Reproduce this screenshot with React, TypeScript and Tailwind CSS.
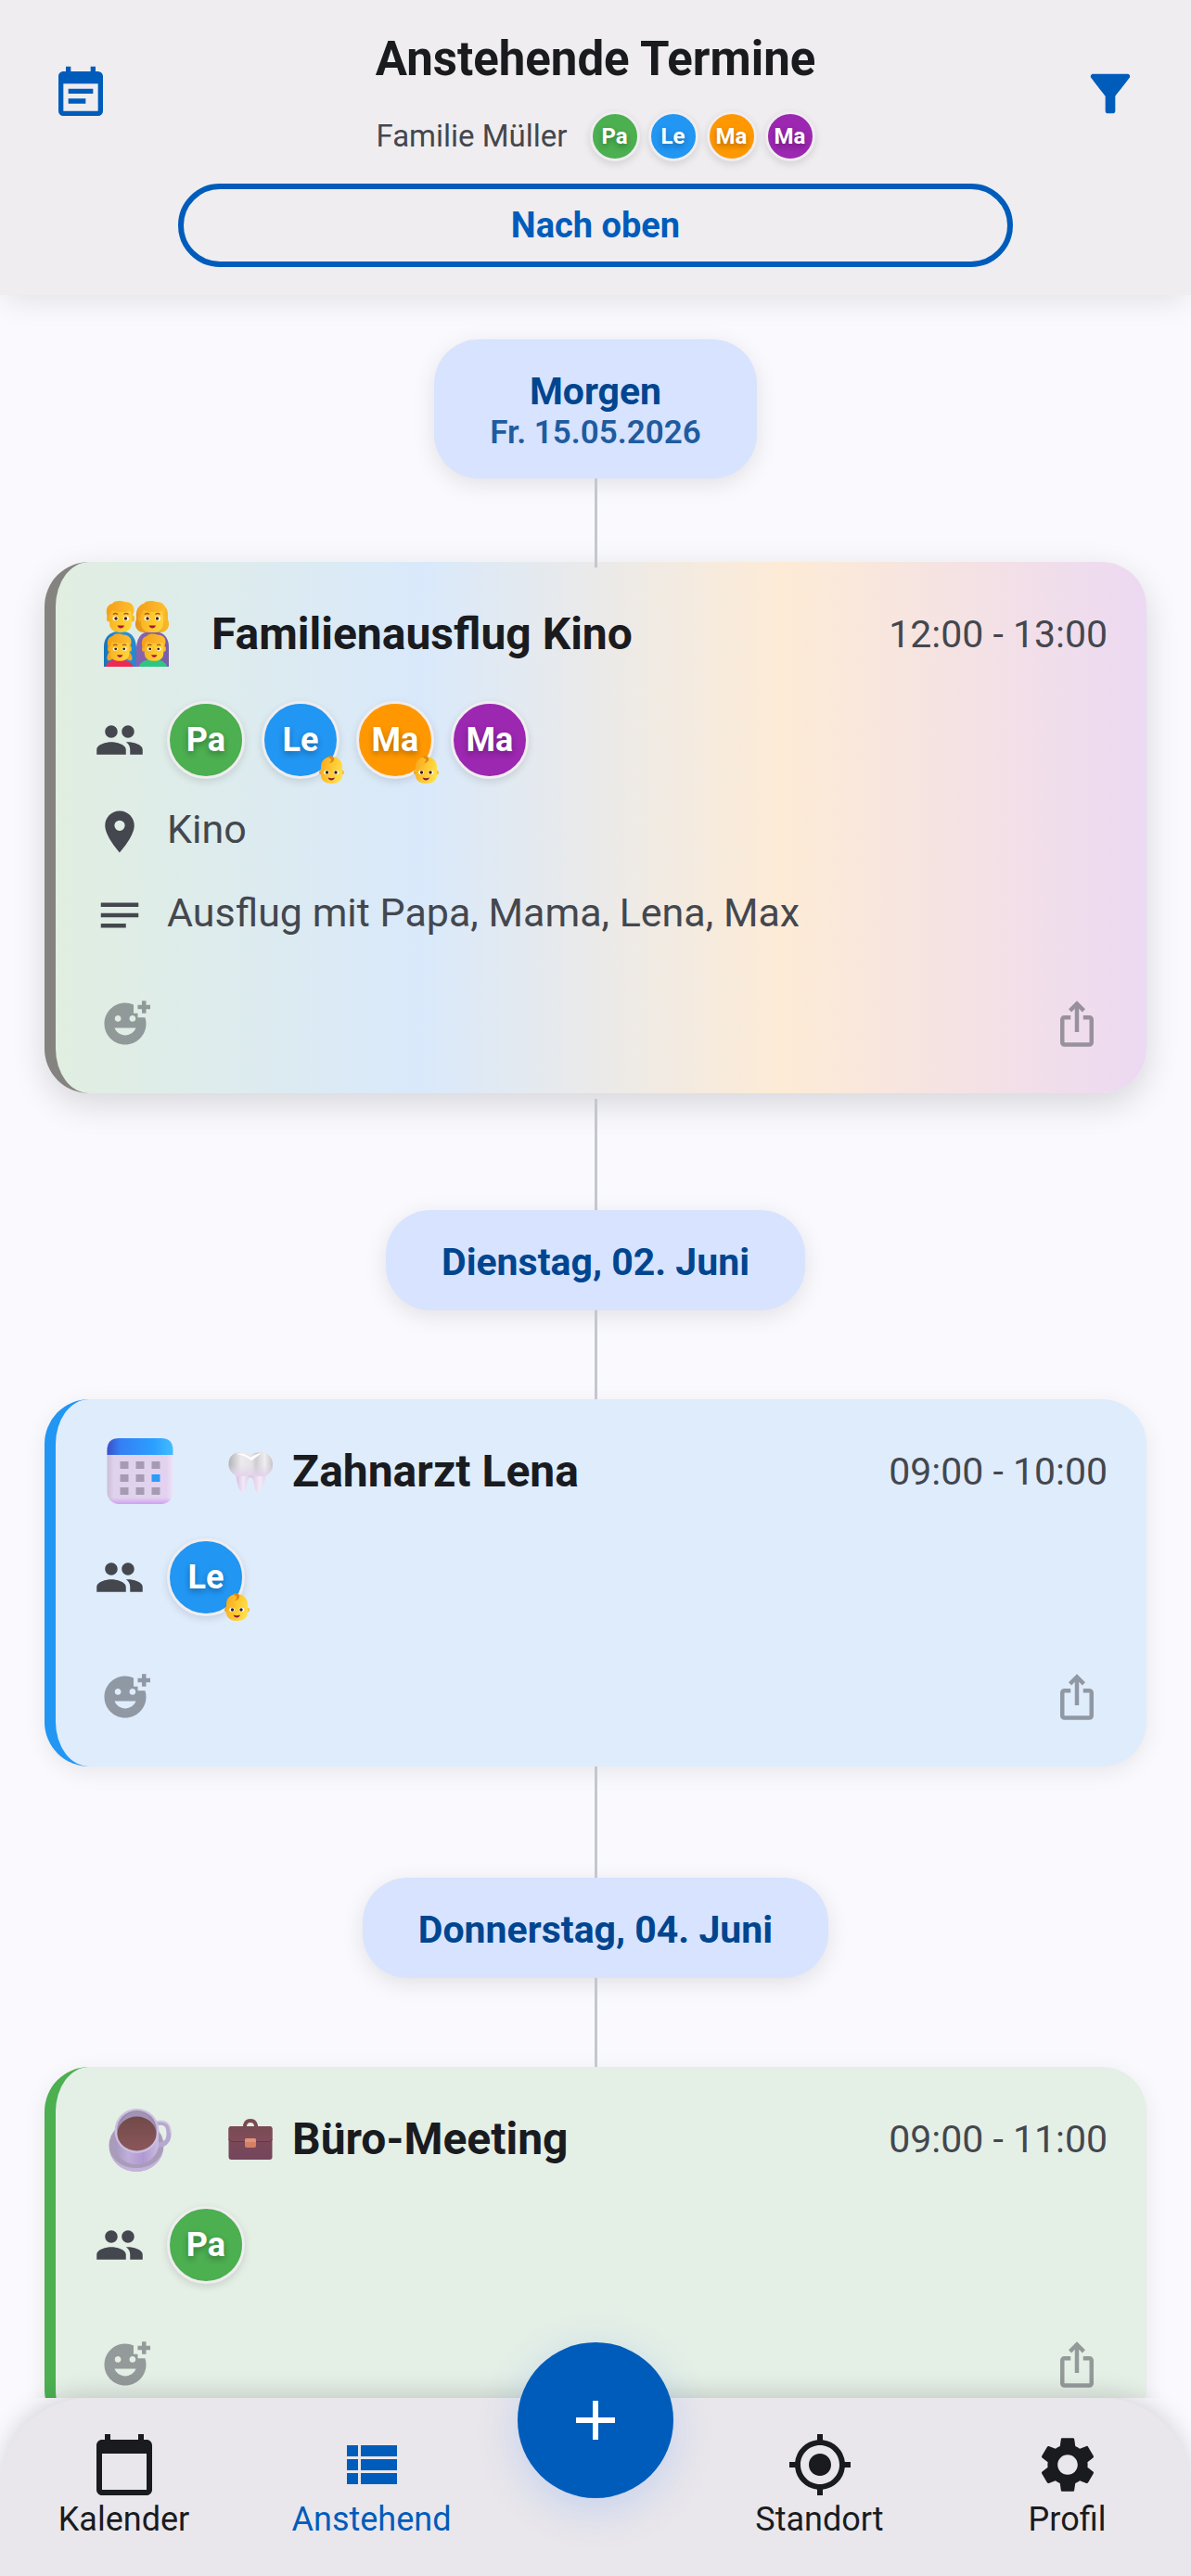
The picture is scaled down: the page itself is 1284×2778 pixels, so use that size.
import { useId } from "react";
import type { ReactNode } from "react";
import {
  MdAdd,
  MdAddReaction,
  MdCalendarToday,
  MdFilterAlt,
  MdIosShare,
  MdLocationOn,
  MdMyLocation,
  MdNotes,
  MdPeople,
  MdSettings,
  MdViewList,
} from "react-icons/md";

type Member = { name: string; color: string; child?: boolean };

const PAPA: Member = { name: "Pa", color: "bg-[#4caf50]" };
const LENA: Member = { name: "Le", color: "bg-[#2196f3]", child: true };
const MAX: Member = { name: "Ma", color: "bg-[#ff9800]", child: true };
const MAMA: Member = { name: "Ma", color: "bg-[#9c27b0]" };
const FAMILY = [PAPA, LENA, MAX, MAMA];

function CalendarTextIcon() {
  return (
    <svg viewBox="0 0 24 24" className="size-16 fill-current" aria-hidden="true">
      <path d="M14 14H7v2h7v-2m5 5H5V8h14v11m0-16h-1V1h-2v2H8V1H6v2H5c-1.11 0-2 .89-2 2v14a2 2 0 0 0 2 2h14a2 2 0 0 0 2-2V5a2 2 0 0 0-2-2m-2 7H7v2h10v-2z" />
    </svg>
  );
}

function Face({ x, y, long, kid }: { x: number; y: number; long?: boolean; kid?: boolean }) {
  const s = kid ? 0.86 : 1;
  return (
    <g transform={`translate(${x} ${y}) scale(${s})`}>
      {long && (
        <path d="M-12-13C-18-10-17-3-17 2c-3 6 0 14 8 14H9c8 0 11-8 8-14 0-5 1-12-5-15z" fill="url(#blond-dark)" />
      )}
      <ellipse cx="-13" cy="1" rx="2" ry="3.500" fill="#f5ad20" />
      <ellipse cx="13" cy="1" rx="2" ry="3.500" fill="#fbb92a" />
      <path d="M-12-7q12-8 24 0V6c0 6-4 10-12 10S-12 12-12 6z" fill="url(#skin)" />
      <path d="M-14 0c-3-9 0-14 5-15 3-4 10-3 13-2 8 0 12 5 10 12l-2 5-1-7c-8 2-16 1-20-1-2 3-3 5-4 8z" fill="url(#blond)" />
      <path d="M-8-3.500q2.500-2 5 0M3.500-3.500q2.500-2 5 0" stroke="#a8561c" strokeWidth="1.300" fill="none" />
      <ellipse cx="-5.500" cy="1" rx="3" ry="2.400" fill="#fff" />
      <ellipse cx="6" cy="1" rx="3" ry="2.400" fill="#fff" />
      <circle cx="-5" cy="1" r="1.700" fill="#3b1d1d" />
      <circle cx="5.500" cy="1" r="1.700" fill="#3b1d1d" />
      <path d="M-3.500 8.500h7.500q-1 3-3.700 3t-3.800-3z" fill="#a8183f" />
    </g>
  );
}

function FamilyEmoji() {
  return (
    <svg viewBox="0 0 72 72" className="size-[72px]" role="img" aria-label="Familie">
      <defs>
        <linearGradient id="papa-shirt" x1="0" x2="1">
          <stop offset="0" stopColor="#1474b8" />
          <stop offset="0.500" stopColor="#2b93dc" />
          <stop offset="1" stopColor="#2388d0" />
        </linearGradient>
        <linearGradient id="mama-shirt" x1="0" x2="1">
          <stop offset="0" stopColor="#8a62ad" />
          <stop offset="1" stopColor="#7560a8" />
        </linearGradient>
        <linearGradient id="skin" x1="0" x2="1">
          <stop offset="0" stopColor="#f9b423" />
          <stop offset="0.600" stopColor="#ffcc2e" />
          <stop offset="1" stopColor="#ffd43c" />
        </linearGradient>
        <linearGradient id="blond" x1="0" x2="1">
          <stop offset="0" stopColor="#f3a01a" />
          <stop offset="1" stopColor="#ffbe2e" />
        </linearGradient>
        <linearGradient id="blond-dark" x1="0" x2="1">
          <stop offset="0" stopColor="#e2931a" />
          <stop offset="1" stopColor="#f7b92a" />
        </linearGradient>
      </defs>
      <path d="M1 71V50q0-14 13-17h9q12 2 13 17v21z" fill="url(#papa-shirt)" />
      <path d="M36 71V50q1-15 13-17h9q13 3 13 17v21z" fill="url(#mama-shirt)" />
      <Face x={19} y={18} />
      <Face x={53} y={18} long />
      <path d="M3 71q2-8 14-8t16 8z" fill="#ee2a52" />
      <path d="M39 71q2-8 15-8t15 8z" fill="#2fc584" />
      <path d="M7 54q-4 7-2 10 4 1 6-3zM28 54q5 7 3 10-4 1-6-3z" fill="#f5a522" />
      <Face x={18} y={51} kid />
      <Face x={55} y={51} kid />
    </svg>
  );
}

function BabyEmoji() {
  return (
    <svg viewBox="0 0 27 30" className="h-[30px] w-[27px]" role="img" aria-label="Kind">
      <defs>
        <linearGradient id="baby-skin" x1="0" x2="1" y1="0.200" y2="0.600">
          <stop offset="0" stopColor="#f8a81c" />
          <stop offset="0.500" stopColor="#ffc830" />
          <stop offset="1" stopColor="#ffe04a" />
        </linearGradient>
      </defs>
      <circle cx="2.500" cy="18" r="2.500" fill="#f5a323" />
      <circle cx="24.500" cy="18" r="2.500" fill="#fbc02d" />
      <path d="M2 12C2 5 7 1 13.500 1S25 5 25 12v9c0 6-5 9-11.500 9S2 27 2 21z" fill="url(#baby-skin)" />
      <path d="M9 1c5-2 8 1 7 4-1 2-3 3-5 3 2-2 3-4 1-5-1-1-2-1-3-2z" fill="#e08a17" />
      <ellipse cx="8" cy="18" rx="2.800" ry="2.200" fill="#fff" />
      <ellipse cx="18.500" cy="18" rx="2.800" ry="2.200" fill="#fff" />
      <circle cx="8.500" cy="18" r="1.700" fill="#35191d" />
      <circle cx="18" cy="18" r="1.700" fill="#35191d" />
      <path d="M9.500 23.500q4 1.500 7.500 0-1 3-3.700 3t-3.800-3z" fill="#8e1a4a" />
    </svg>
  );
}

function CalendarEmoji() {
  const cells = [0, 1, 2].flatMap((r) => [0, 1, 2].map((c) => ({ r, c })));
  return (
    <svg viewBox="0 0 72 72" className="ml-2 size-[72px]" role="img" aria-label="Kalender">
      <defs>
        <linearGradient id="cal-top" x1="0" x2="1">
          <stop offset="0" stopColor="#3b4fc8" />
          <stop offset="0.200" stopColor="#357ff5" />
          <stop offset="0.700" stopColor="#2b9fff" />
          <stop offset="1" stopColor="#42bcff" />
        </linearGradient>
        <linearGradient id="cal-body" x1="0" x2="1">
          <stop offset="0" stopColor="#c9bdd4" />
          <stop offset="0.100" stopColor="#dfd2ec" />
          <stop offset="0.900" stopColor="#e2d2ef" />
          <stop offset="1" stopColor="#eee3f8" />
        </linearGradient>
        <linearGradient id="cal-foot" x1="0" x2="0" y1="0" y2="1">
          <stop offset="0.900" stopColor="#d3a4f2" stopOpacity="0" />
          <stop offset="1" stopColor="#cf9ff2" />
        </linearGradient>
      </defs>
      <rect x="0.500" y="0" width="71" height="71" rx="13" fill="url(#cal-body)" />
      <rect x="0.500" y="0" width="71" height="71" rx="13" fill="url(#cal-foot)" />
      <path d="M.5 18v-5q0-13 13-13h45q13 0 13 13v5z" fill="url(#cal-top)" />
      {cells.map(({ r, c }) => (
        <rect
          key={`${r}${c}`}
          x={14.5 + c * 17}
          y={25 + r * 14}
          width="9"
          height="8"
          fill={r === 1 && c === 2 ? "#2f9bf7" : "#a59bb2"}
        />
      ))}
    </svg>
  );
}

function CoffeeEmoji() {
  return (
    <svg viewBox="0 0 72 72" className="ml-2 size-[72px]" role="img" aria-label="Kaffee">
      <defs>
        <linearGradient id="mug" x1="0" x2="1">
          <stop offset="0" stopColor="#a898c0" />
          <stop offset="0.300" stopColor="#bfaed9" />
          <stop offset="0.650" stopColor="#b198d2" />
          <stop offset="1" stopColor="#c9bcdf" />
        </linearGradient>
        <linearGradient id="coffee" x1="0" x2="0" y1="0" y2="1">
          <stop offset="0" stopColor="#714a4a" />
          <stop offset="1" stopColor="#8b565a" />
        </linearGradient>
      </defs>
      <ellipse cx="32" cy="43" rx="29.500" ry="28" fill="#a99cba" />
      <path d="M3 48c3 14 15 23 29 23s26-9 29-23c-4 12-15 19-29 19S7 60 3 48z" fill="#c3b4d9" />
      <path d="M53 19q14-4 14 11 0 13-14 12" stroke="#b7a8cf" strokeWidth="5" fill="none" />
      <path d="M52 17q17-3 17 12" stroke="#d5cbe4" strokeWidth="1.500" fill="none" />
      <path d="M9 26v16c1 13 11 21 23 21s23-8 24-21V26z" fill="url(#mug)" />
      <circle cx="32.500" cy="27" r="24" fill="#cbbfdf" />
      <circle cx="32.500" cy="26.500" r="21.500" fill="#9b8baf" />
      <path d="M13.500 20q8-14 19-14t19 14" fill="#a394b6" />
      <ellipse cx="32.500" cy="30" rx="21" ry="18.500" fill="url(#coffee)" />
    </svg>
  );
}

function ToothEmoji() {
  return (
    <svg viewBox="0 0 48 48" className="size-12" role="img" aria-label="Zahn">
      <defs>
        <linearGradient id="crown" x1="0" x2="1">
          <stop offset="0" stopColor="#b2b1b5" />
          <stop offset="0.280" stopColor="#eceaec" />
          <stop offset="0.520" stopColor="#e6e3e8" />
          <stop offset="0.620" stopColor="#cfccd1" />
          <stop offset="0.820" stopColor="#efedf0" />
          <stop offset="1" stopColor="#c6c3c9" />
        </linearGradient>
        <linearGradient id="crown-fade" x1="0" x2="0" y1="0" y2="1">
          <stop offset="0.500" stopColor="#e3d3ec" stopOpacity="0" />
          <stop offset="1" stopColor="#e3d3ec" />
        </linearGradient>
        <linearGradient id="tooth-root" x1="0" x2="1">
          <stop offset="0" stopColor="#d3bedd" />
          <stop offset="0.250" stopColor="#f3e8f8" />
          <stop offset="0.500" stopColor="#d9c6e2" />
          <stop offset="0.800" stopColor="#f5eaf9" />
          <stop offset="1" stopColor="#e3d2ea" />
        </linearGradient>
      </defs>
      <path d="M8 25c1 8 2 13 4 18 2 4 6 4 7 0 1-5 1-12 5-13 4 1 4 8 5 13 1 4 5 4 7 0 2-5 4-10 5-18z" fill="url(#tooth-root)" />
      <path
        d="M13 3c4 0 8 1 11 3 3-2 7-3 11-3 8 0 13 6 13 13 0 6-3 10-8 13-5 1-8-1-11-1h-9c-3 0-5 2-10 1C4 26 .5 22 .5 16 .5 9 5 3 13 3z"
        fill="url(#crown)"
      />
      <path
        d="M13 3c4 0 8 1 11 3 3-2 7-3 11-3 8 0 13 6 13 13 0 6-3 10-8 13-5 1-8-1-11-1h-9c-3 0-5 2-10 1C4 26 .5 22 .5 16 .5 9 5 3 13 3z"
        fill="url(#crown-fade)"
      />
      <path d="M8 5q9-2 16 4 5-4 12-5-5 4-11 8Q18 6 8 5z" fill="#fff" />
    </svg>
  );
}

function BriefcaseEmoji() {
  return (
    <svg viewBox="0 0 48 48" className="size-12" role="img" aria-label="Aktentasche">
      <defs>
        <linearGradient id="case" x1="0" x2="0" y1="0" y2="1">
          <stop offset="0" stopColor="#7d4a55" />
          <stop offset="1" stopColor="#74465c" />
        </linearGradient>
        <linearGradient id="flap" x1="0" x2="0" y1="0" y2="1">
          <stop offset="0" stopColor="#774a52" />
          <stop offset="1" stopColor="#824c5c" />
        </linearGradient>
      </defs>
      <path d="M18 12V9q1-5 6-5t6 5v3" stroke="#7b4a4e" strokeWidth="4" fill="none" />
      <rect x="0.500" y="10" width="47" height="36" rx="3" fill="url(#case)" />
      <path d="M.5 24V13q0-3 3-3h41q3 0 3 3v11q-1 2.500-4 2.500h-39q-3 0-4-2.500z" fill="url(#flap)" />
      <path d="M.5 24q1 2.500 4 2.500h39q3 0 4-2.500" stroke="#6a3455" strokeWidth="1" fill="none" />
      <rect x="18" y="23" width="12" height="10" rx="2" fill="#d57f66" />
      <path d="M18 27v-2q0-2 2-2h8q2 0 2 2v2z" fill="#dd957a" />
    </svg>
  );
}

function Avatar({ member, small }: { member: Member; small?: boolean }) {
  return (
    <li
      className={`relative flex shrink-0 items-center justify-center rounded-full border-3 border-[#efedf0] font-bold text-white shadow-[0_3px_9px_rgba(0,0,0,0.12)] [text-shadow:0_3px_6px_rgba(0,0,0,0.3)] ${member.color} ${
        small ? "size-[54px] text-2xl" : "size-[84px] text-4xl"
      }`}
    >
      {member.name}
      {member.child && !small && (
        <span className="absolute -right-2 -bottom-2">
          <BabyEmoji />
        </span>
      )}
    </li>
  );
}

function Header() {
  return (
    <header className="relative z-20 flex shrink-0 items-start bg-[#efedf0] px-[39px] pb-[30px] shadow-[0_12px_30px_-6px_rgba(0,0,0,0.1)]">
      <button aria-label="Kalender" className="mt-[53px] flex size-24 items-center justify-center text-[#005cbb]">
        <CalendarTextIcon />
      </button>
      <div className="flex flex-1 flex-col items-center px-[57px] pt-[34px]">
        <h1 className="text-[51px] leading-[60px] font-bold text-[#1a1b1f]">Anstehende Termine</h1>
        <div className="mt-[26px] flex items-center gap-6">
          <span className="text-[33px] leading-[54px] text-[#44474e]">Familie Müller</span>
          <ul className="flex gap-[9px]">
            {FAMILY.map((m, i) => (
              <Avatar key={i} member={m} small />
            ))}
          </ul>
        </div>
        <button className="mt-6 h-[90px] w-full rounded-full border-6 border-[#005cbb] text-[38px] font-bold text-[#005cbb]">
          Nach oben
        </button>
      </div>
      <button aria-label="Filter" className="mt-[53px] flex size-24 items-center justify-center text-[#005cbb]">
        <MdFilterAlt className="size-16" />
      </button>
    </header>
  );
}

function DayPill({ title, date }: { title: string; date?: string }) {
  return (
    <h2 className="relative rounded-[48px] bg-[#d7e3ff] px-[60px] pt-8 pb-7 text-center text-[41px] leading-[48px] font-bold text-[#00458f] shadow-[0_6px_24px_rgba(0,0,0,0.1)]">
      {title}
      {date && <span className="block text-[35px] leading-[42px] font-semibold opacity-85">{date}</span>}
    </h2>
  );
}

function Line({ long }: { long?: boolean }) {
  return <div className={`relative z-10 w-[3px] shrink-0 bg-[#c4c6d0] ${long ? "h-[120px]" : "h-24"}`} />;
}

type EventCardProps = {
  className: string;
  emoji: ReactNode;
  titleEmoji?: ReactNode;
  title: string;
  time: string;
  members: Member[];
  place?: string;
  note?: string;
};

function EventCard({ className, emoji, titleEmoji, title, time, members, place, note }: EventCardProps) {
  const id = useId();
  return (
    <article
      aria-labelledby={id}
      className={`w-full shrink-0 rounded-[48px] border-l-12 bg-origin-padding p-[42px] text-[#44474e] ${className}`}
    >
      <div className="flex h-[72px] items-center">
        <span className="flex w-[90px] justify-center">{emoji}</span>
        <h3 id={id} className="ml-9 flex flex-1 items-center text-5xl leading-[72px] font-bold text-[#1a1b1f]">
          {titleEmoji && <span className="mr-[21px] ml-[18px]">{titleEmoji}</span>}
          {title}
        </h3>
        <time className="text-[41px] leading-[72px]">{time}</time>
      </div>
      <div className="mt-9 flex items-center gap-6">
        <MdPeople className="size-[54px]" />
        <ul className="flex gap-[18px]">
          {members.map((m, i) => (
            <Avatar key={i} member={m} />
          ))}
        </ul>
      </div>
      {(place || note) && (
        <div className="mt-[30px] flex flex-col gap-[33px] text-[43px] leading-[48px]">
          {place && (
            <p className="flex min-h-[57px] items-start gap-6">
              <MdLocationOn className="size-[54px]" />
              {place}
            </p>
          )}
          {note && (
            <p className="flex min-h-[57px] items-start gap-6">
              <MdNotes className="size-[54px]" />
              {note}
            </p>
          )}
        </div>
      )}
      <div className="mt-[54px] flex justify-between">
        <button aria-label="Reaktion hinzufügen" className="p-1.5 opacity-50">
          <MdAddReaction className="size-[54px]" />
        </button>
        <button aria-label="Teilen" className="p-1.5 opacity-50">
          <MdIosShare className="size-[54px]" />
        </button>
      </div>
    </article>
  );
}

function NavItem({ icon, label, active }: { icon: ReactNode; label: string; active?: boolean }) {
  return (
    <a
      href="#"
      aria-current={active ? "page" : undefined}
      className={`flex flex-col items-center text-4xl leading-[42px] ${active ? "text-[#005cbb]" : "text-[#1a1b1f]"}`}
    >
      {icon}
      <span className="mt-0.5">{label}</span>
    </a>
  );
}

export default function App() {
  return (
    <div className="flex h-screen flex-col overflow-hidden bg-[#faf9fd] font-[Roboto,sans-serif]">
      <Header />
      <main className="flex min-h-0 flex-1 flex-col items-center overflow-y-auto px-12 pt-12 [scrollbar-width:none]">
        <DayPill title="Morgen" date="Fr. 15.05.2026" />
        <Line />
        <EventCard
          className="-translate-y-1.5 border-[#85837f] bg-linear-[90deg,#e1eee1,#d9e9fb_33.33%,#fdebd6_66.67%,#ecd9f2] shadow-[0_12px_36px_rgba(0,0,0,0.14)]"
          emoji={<FamilyEmoji />}
          title="Familienausflug Kino"
          time="12:00 - 13:00"
          members={FAMILY}
          place="Kino"
          note="Ausflug mit Papa, Mama, Lena, Max"
        />
        <Line long />
        <DayPill title="Dienstag, 02. Juni" />
        <Line />
        <EventCard
          className="border-[#2196f3] bg-[#dfecfc] shadow-[0_6px_24px_rgba(0,0,0,0.08)]"
          emoji={<CalendarEmoji />}
          titleEmoji={<ToothEmoji />}
          title="Zahnarzt Lena"
          time="09:00 - 10:00"
          members={[LENA]}
        />
        <Line long />
        <DayPill title="Donnerstag, 04. Juni" />
        <Line />
        <EventCard
          className="border-[#4caf50] bg-[#e4efe6] shadow-[0_6px_24px_rgba(0,0,0,0.08)]"
          emoji={<CoffeeEmoji />}
          titleEmoji={<BriefcaseEmoji />}
          title="Büro-Meeting"
          time="09:00 - 11:00"
          members={[PAPA]}
        />
      </main>
      <nav className="relative z-20 grid shrink-0 grid-cols-[1fr_1fr_216px_1fr_1fr] rounded-t-[96px] bg-[#e9e7eb] pt-9 pb-10 shadow-[0_-6px_24px_rgba(0,0,0,0.14)]">
        <NavItem icon={<MdCalendarToday className="size-[72px]" />} label="Kalender" />
        <NavItem icon={<MdViewList className="size-[72px]" />} label="Anstehend" active />
        <button
          aria-label="Neuer Termin"
          className="absolute -top-[60px] left-1/2 flex size-[168px] -translate-x-1/2 items-center justify-center rounded-full bg-[#005cbb] text-white shadow-[0_12px_48px_rgba(0,92,255,0.16)]"
        >
          <MdAdd className="size-[72px]" />
        </button>
        <span />
        <NavItem icon={<MdMyLocation className="size-[72px]" />} label="Standort" />
        <NavItem icon={<MdSettings className="size-[72px]" />} label="Profil" />
      </nav>
    </div>
  );
}
